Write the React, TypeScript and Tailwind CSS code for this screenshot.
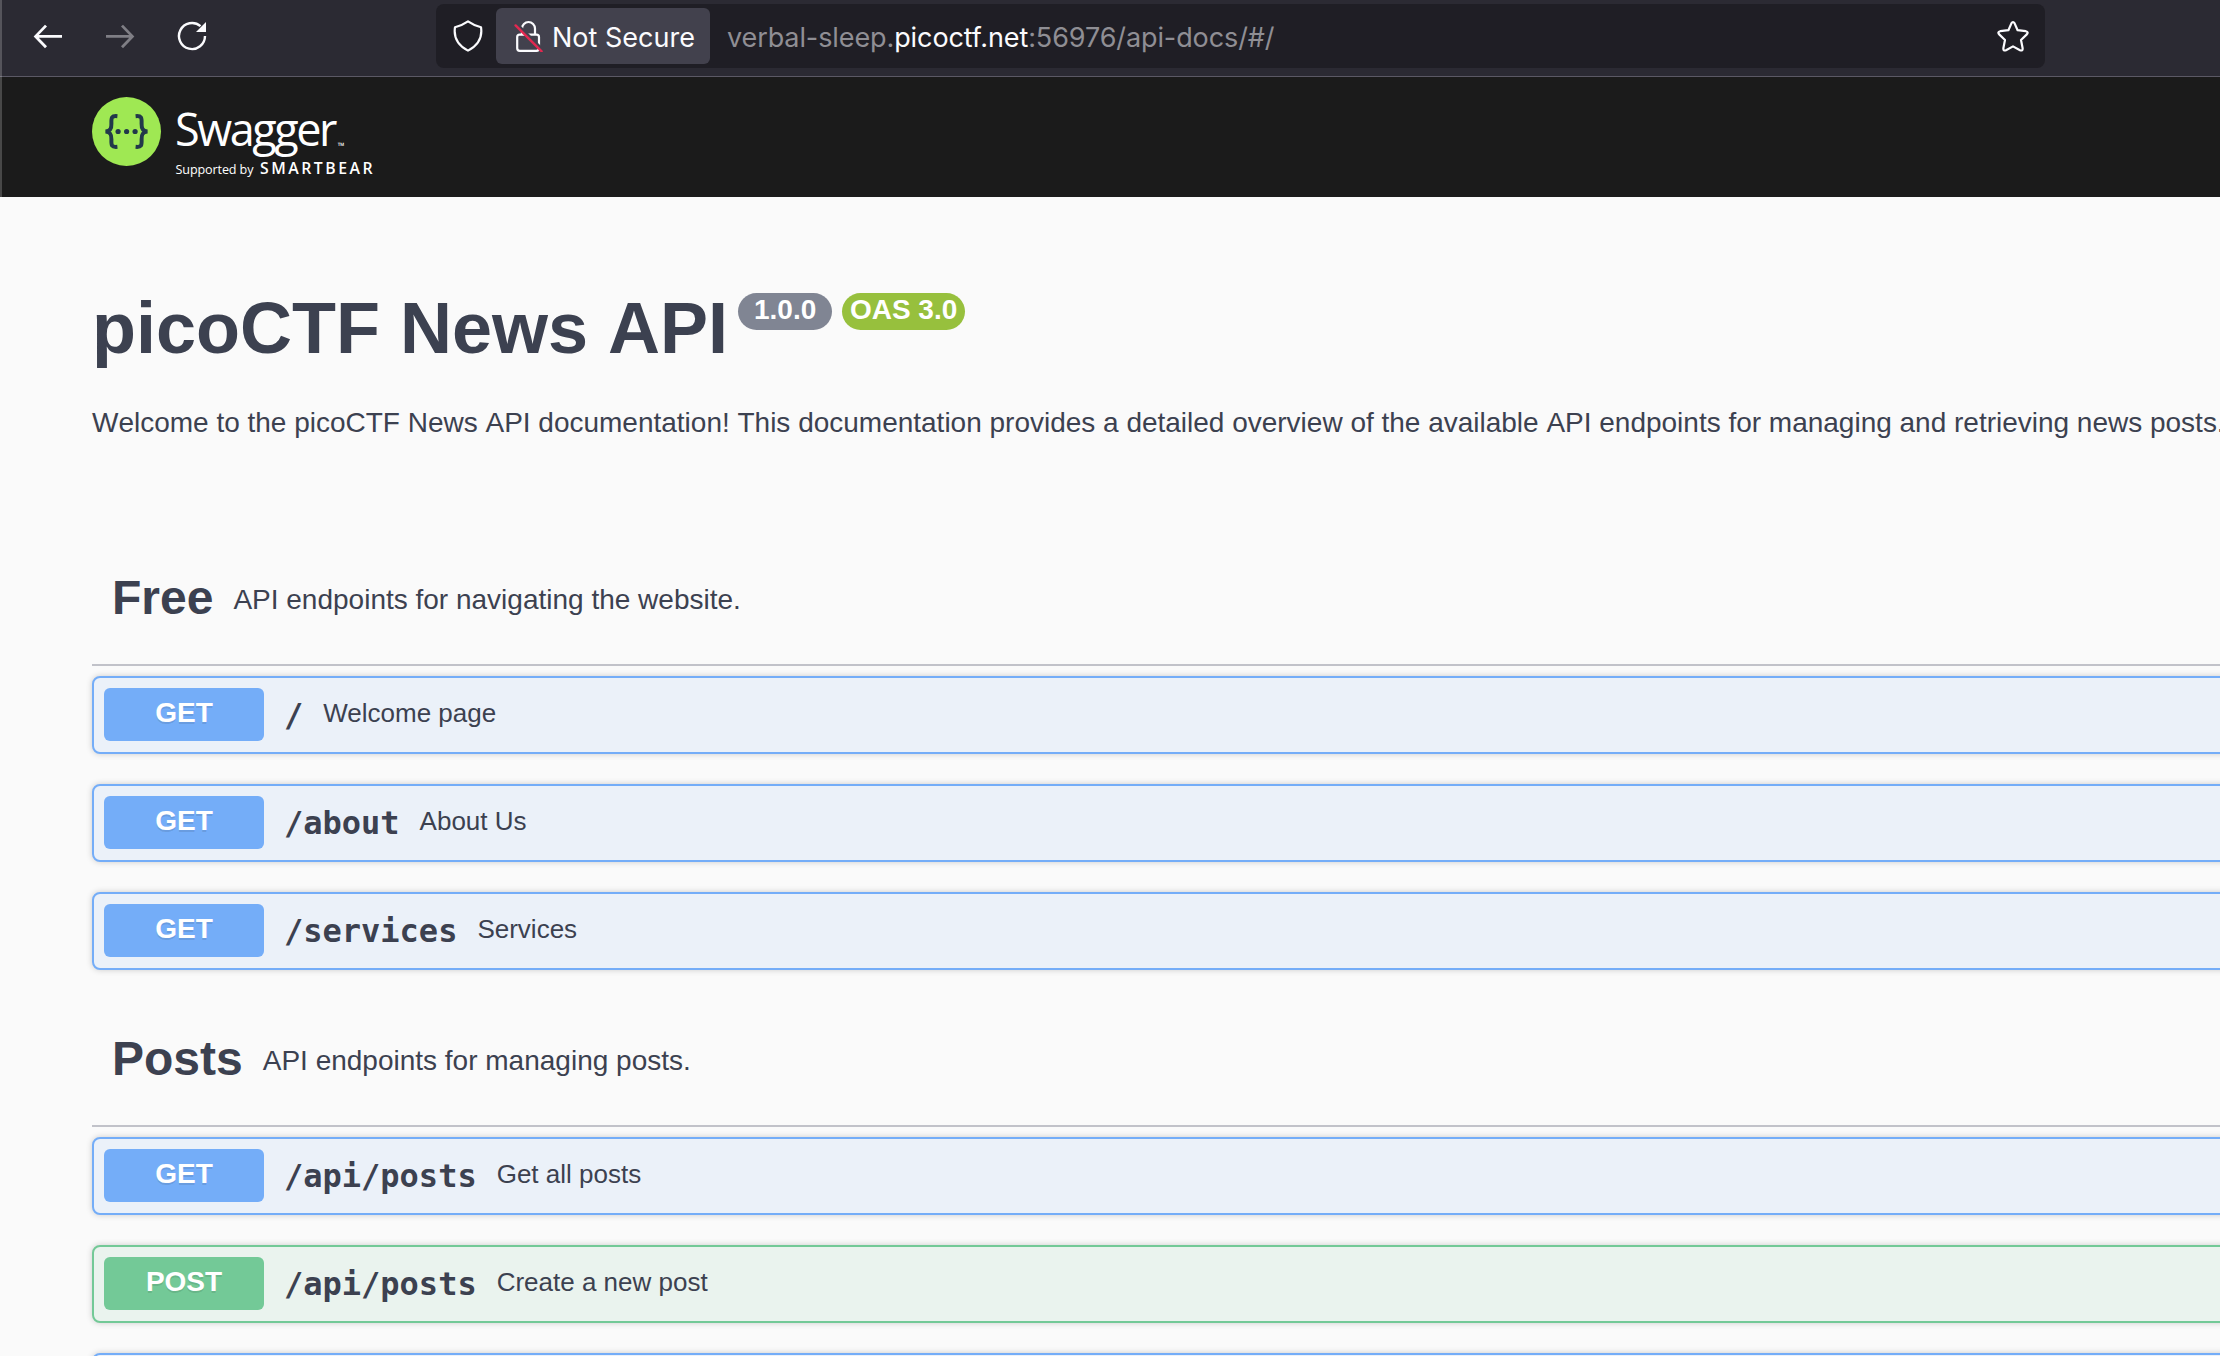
import type { ReactNode } from "react";

type Method = "GET" | "POST";
type Endpoint = { method: Method; path: string; summary: string };
type Section = { name: string; description: string; endpoints: Endpoint[] };

const sections: Section[] = [
  {
    name: "Free",
    description: "API endpoints for navigating the website.",
    endpoints: [
      { method: "GET", path: "/", summary: "Welcome page" },
      { method: "GET", path: "/about", summary: "About Us" },
      { method: "GET", path: "/services", summary: "Services" },
    ],
  },
  {
    name: "Posts",
    description: "API endpoints for managing posts.",
    endpoints: [
      { method: "GET", path: "/api/posts", summary: "Get all posts" },
      { method: "POST", path: "/api/posts", summary: "Create a new post" },
      { method: "GET", path: "", summary: "" },
    ],
  },
];

const blockStyle: Record<Method, string> = {
  GET: "border-[#74adf8] bg-[#ebf1f9]",
  POST: "border-[#73c997] bg-[#eaf3ee]",
};
const badgeStyle: Record<Method, string> = {
  GET: "bg-[#74adf8]",
  POST: "bg-[#73c997]",
};

function Icon({ children, className = "" }: { children: ReactNode; className?: string }) {
  return (
    <svg viewBox="0 0 32 32" fill="none" stroke="currentColor" strokeWidth="2.6" className={"h-8 w-8 shrink-0 " + className}>
      {children}
    </svg>
  );
}

function BrowserBar() {
  return (
    <div className="flex h-[77px] items-start border-b border-[#5b5965] bg-[#2b2a33] pl-8 text-[#fbfbfe]">
      <div className="flex gap-10 pt-5">
        <Icon>
          <path d="M30 16.4H4M14 5.6 3.6 16.4 14 27.2" strokeWidth="2.8" />
        </Icon>
        <Icon className="text-[#7f7e85]">
          <path d="M2 16.4H28M18 5.6 28.4 16.4 18 27.2" strokeWidth="2.8" />
        </Icon>
        <Icon>
          <path d="M29 16A13 13 0 1 1 24.5 6.2" strokeWidth="2.4" />
          <path d="M30 2V12H20Z" fill="currentColor" stroke="none" />
        </Icon>
      </div>
      <div className="mt-1 ml-[228px] flex h-16 w-[1609px] items-center rounded-lg bg-[#1f1e25] font-[Inter,sans-serif] text-[27px]">
        <Icon className="ml-4">
          <path d="M16 1.4Q22 5.6 29 7.2Q31.4 22.5 16 30.6Q.6 22.5 3 7.2Q10 5.6 16 1.4Z" strokeLinejoin="round" strokeWidth="2.2" />
        </Icon>
        <div className="ml-3 flex h-14 w-[214px] items-center rounded-md bg-[#42414d]">
          <Icon className="ml-4">
            <path d="M10 14V8.5A6.5 6.5 0 0 1 23 8.5V14" strokeWidth="2.2" />
            <rect x="5.2" y="14.6" width="21.8" height="16.2" rx="2.5" strokeWidth="2.2" />
            <path d="m5.4 4.6 26 26" stroke="#42414d" strokeWidth="3" />
            <path d="m3.6 5.4 26 26" stroke="#e22850" strokeWidth="2.4" strokeLinecap="round" />
          </Icon>
          <span className="ml-2 pt-1 whitespace-nowrap">Not Secure</span>
        </div>
        <div className="ml-[17px] pt-1 tracking-[-0.1px] whitespace-nowrap text-[#8f8e94]">
          verbal-sleep.<span className="text-[#fbfbfe]">picoctf.net</span>:56976/api-docs/#/
        </div>
        <Icon className="mr-4 ml-auto">
          <path
            d="M14.4 3.4Q16 .6 17.6 3.4L20.6 10.2 28.8 11.2Q31.8 12 29.8 14.4L24 20 25.6 28Q26 31.4 23 30.2L16 26.4 9 30.2Q6 31.4 6.4 28L8 20 2.2 14.4Q.2 12 3.2 11.2L11.4 10.2Z"
            strokeLinejoin="round"
            strokeWidth="2.2"
          />
        </Icon>
      </div>
    </div>
  );
}

function SwaggerLogo() {
  return (
    <svg viewBox="0 0 290 90" className="h-[90px] w-[290px]">
      <circle cx="34.5" cy="34.5" r="34.5" fill="#9fe853" />
      <g fill="none" stroke="#22384a" strokeWidth="4">
        <path d="M25.4 19.2C19.5 18.6 19.2 20.5 19.4 26.5C19.6 31.5 18.6 34 13.6 34.6C18.6 35.2 19.6 37.5 19.4 42.5C19.2 48.5 19.5 50.4 25.4 49.8" />
        <path d="M43.6 19.2C49.5 18.6 49.8 20.5 49.6 26.5C49.4 31.5 50.4 34 55.4 34.6C50.4 35.2 49.4 37.5 49.6 42.5C49.8 48.5 49.5 50.4 43.6 49.8" />
      </g>
      <g fill="#22384a">
        <circle cx="26.1" cy="34.5" r="2.6" />
        <circle cx="34.6" cy="34.5" r="2.6" />
        <circle cx="43.1" cy="34.5" r="2.6" />
      </g>
      <g fill="#fff">
        <text x="83" y="49" fontSize="45" textLength="162.5" className="font-['Open_Sans',sans-serif]">Swagger</text>
        <text x="245.8" y="51.6" fontSize="9" className="font-['Open_Sans',sans-serif]">™</text>
        <text x="83.5" y="76.6" fontSize="12.6" textLength="78" className="font-['Open_Sans',sans-serif]">Supported by</text>
        <text x="168" y="76.6" fontSize="15.8" fontWeight="600" textLength="112.5" className="font-['Open_Sans',sans-serif]">SMARTBEAR</text>
      </g>
    </svg>
  );
}

function EndpointRow({ method, path, summary }: Endpoint) {
  return (
    <div className={"flex h-[78px] items-start rounded-lg border-2 p-[10px] shadow-[0_0_6px_rgba(0,0,0,0.19)] " + blockStyle[method]}>
      {path && (
        <>
          <div className={"flex h-[53px] w-40 justify-center rounded-md pt-[9px] text-[28px] leading-8 font-bold text-white [text-shadow:0_2px_0_rgba(0,0,0,0.1)] " + badgeStyle[method]}>
            {method}
          </div>
          <div className="flex items-baseline gap-5 pt-2 pl-5">
            <span className="font-['DejaVu_Sans_Mono',monospace] text-[32px] leading-[38px] font-bold">{path}</span>
            <span className="relative -top-1 text-[26px] leading-[30px]">{summary}</span>
          </div>
        </>
      )}
    </div>
  );
}

function TagSection({ name, description, endpoints }: Section) {
  return (
    <section>
      <div className="mb-[10px] flex h-[136px] items-start border-b-2 border-[#c1c2c9] pt-10 pl-5">
        <h2 className="text-[48px] leading-[56px] font-bold">{name}</h2>
        <p className="pt-[14px] pl-5 text-[28px] leading-8">{description}</p>
      </div>
      <div className="flex flex-col gap-[30px]">
        {endpoints.map((e, i) => (
          <EndpointRow key={i} {...e} />
        ))}
      </div>
    </section>
  );
}

export default function App() {
  return (
    <div className="relative h-[1356px] w-[2220px] overflow-hidden bg-[#fafafa] font-['Liberation_Sans',Arial,sans-serif] text-[#3c4150]">
      <BrowserBar />
      <div className="h-[120px] bg-[#1b1b1b] pt-5 pl-[92px]">
        <SwaggerLogo />
      </div>
      <div className="absolute top-0 left-0 h-[197px] w-[2px] bg-white/20" />
      <main className="w-[2900px] pt-[90px] pl-[92px]">
        <div className="flex items-start">
          <h1 className="text-[72px] leading-[82px] font-bold whitespace-nowrap [font-kerning:none]">picoCTF News API</h1>
          <div className="mt-[6px] ml-[10px] flex gap-[10px] text-[28px] leading-[34px] font-bold text-white">
            <span className="h-[37px] w-[94px] rounded-full bg-[#808593] text-center">1.0.0</span>
            <span className="h-[37px] w-[123px] rounded-full bg-[#97c03d] text-center">OAS 3.0</span>
          </div>
        </div>
        <p className="mt-[38px] text-[28px] leading-8 tracking-[-0.007px] whitespace-nowrap [font-kerning:none]">
          Welcome to the picoCTF News API documentation! This documentation provides a detailed overview of the available API endpoints for managing and retrieving news posts.
        </p>
        <div className="flex flex-col gap-[21px] pt-[91px]">
          {sections.map((s) => (
            <TagSection key={s.name} {...s} />
          ))}
        </div>
      </main>
    </div>
  );
}
